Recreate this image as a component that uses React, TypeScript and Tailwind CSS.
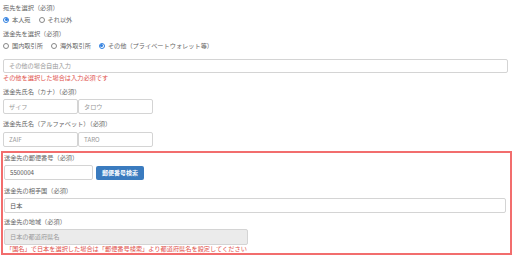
import React from 'react';

const Radio: React.FC<{ checked?: boolean; label: string }> = ({ checked, label }) => (
  <span className="inline-flex items-center mr-[8px]">
    <span
      className={`inline-flex items-center justify-center w-[6px] h-[6px] rounded-full border ${
        checked ? 'border-[#2f7fe0]' : 'border-[#888]'
      } mr-[3px] bg-white`}
    >
      {checked && <span className="w-[3px] h-[3px] rounded-full bg-[#2f7fe0]" />}
    </span>
    {label}
  </span>
);

const Field: React.FC<{ value: string; className?: string; muted?: boolean }> = ({ value, className = '', muted }) => (
  <div
    className={`flex items-center pl-[5px] border border-[#d4d4d4] rounded-[2px] ${
      muted ? 'text-[#999]' : 'text-[#555]'
    } ${className}`}
  >
    {value}
  </div>
);

export default function App() {
  return (
    <div
      className="w-[512px] h-[261px] bg-white pl-[1px] text-[6.2px] text-[#666] overflow-hidden"
      style={{ fontFamily: '"Noto Sans CJK JP", "Noto Sans", sans-serif' }}
    >
      <div className="pl-[2px] pr-[4px] pt-[2px]">
        <div className="h-[12px] leading-[12px]">宛先を選択（必須）</div>
        <div className="h-[12px] flex items-center">
          <Radio checked label="本人宛" />
          <Radio label="それ以外" />
        </div>
        <div className="mt-[2px] h-[12px] leading-[12px]">送金先を選択（必須）</div>
        <div className="h-[12px] flex items-center">
          <Radio label="国内取引所" />
          <Radio label="海外取引所" />
          <Radio checked label="その他（プライベートウォレット等）" />
        </div>
        <Field value="その他の場合自由入力" muted className="mt-[7px] h-[14px]" />
        <div className="h-[10px] leading-[10px] text-[#e0504a]">その他を選択した場合は入力必須です</div>

        <div className="mt-[3px] h-[12px] leading-[12px]">送金先氏名（カナ）（必須）</div>
        <div className="mt-[1px] flex">
          <Field value="ザイフ" muted className="w-[75px] h-[15px]" />
          <Field value="タロウ" muted className="w-[75px] h-[15px]" />
        </div>

        <div className="mt-[4px] h-[12px] leading-[12px]">送金先氏名（アルファベット）（必須）</div>
        <div className="mt-[2px] flex">
          <Field value="ZAIF" muted className="w-[75px] h-[15px]" />
          <Field value="TARO" muted className="w-[75px] h-[15px]" />
        </div>
      </div>

      {/* highlighted address block */}
      <div className="mt-[4px] border-2 border-[#f26d6d] pl-[1px] pr-[4px]">
        <div className="h-[9px] leading-[9px]">送金先の郵便番号（必須）</div>
        <div className="mt-[3px] flex items-center gap-[3px] h-[15px]">
          <Field value="5500004" className="w-[89px] h-[15px]" />
          <button className="w-[48px] h-[14px] rounded-[2px] bg-[#3a7bbf] text-white font-bold text-[6px] flex items-center justify-center">
            郵便番号検索
          </button>
        </div>
        <div className="mt-[5px] h-[12px] leading-[12px]">送金先の相手国（必須）</div>
        <Field value="日本" className="mt-[1px] h-[15px]" />
        <div className="mt-[3px] h-[12px] leading-[12px]">送金先の地域（必須）</div>
        <Field value="日本の都道府県名" muted className="mt-[1px] h-[16px] w-[244px] bg-[#ebebeb]" />
        <div className="h-[8px] leading-[8px] pl-[2px] text-[#e0504a]">
          「国名」で日本を選択した場合は「郵便番号検索」より都道府県名を設定してください
        </div>
      </div>
    </div>
  );
}
